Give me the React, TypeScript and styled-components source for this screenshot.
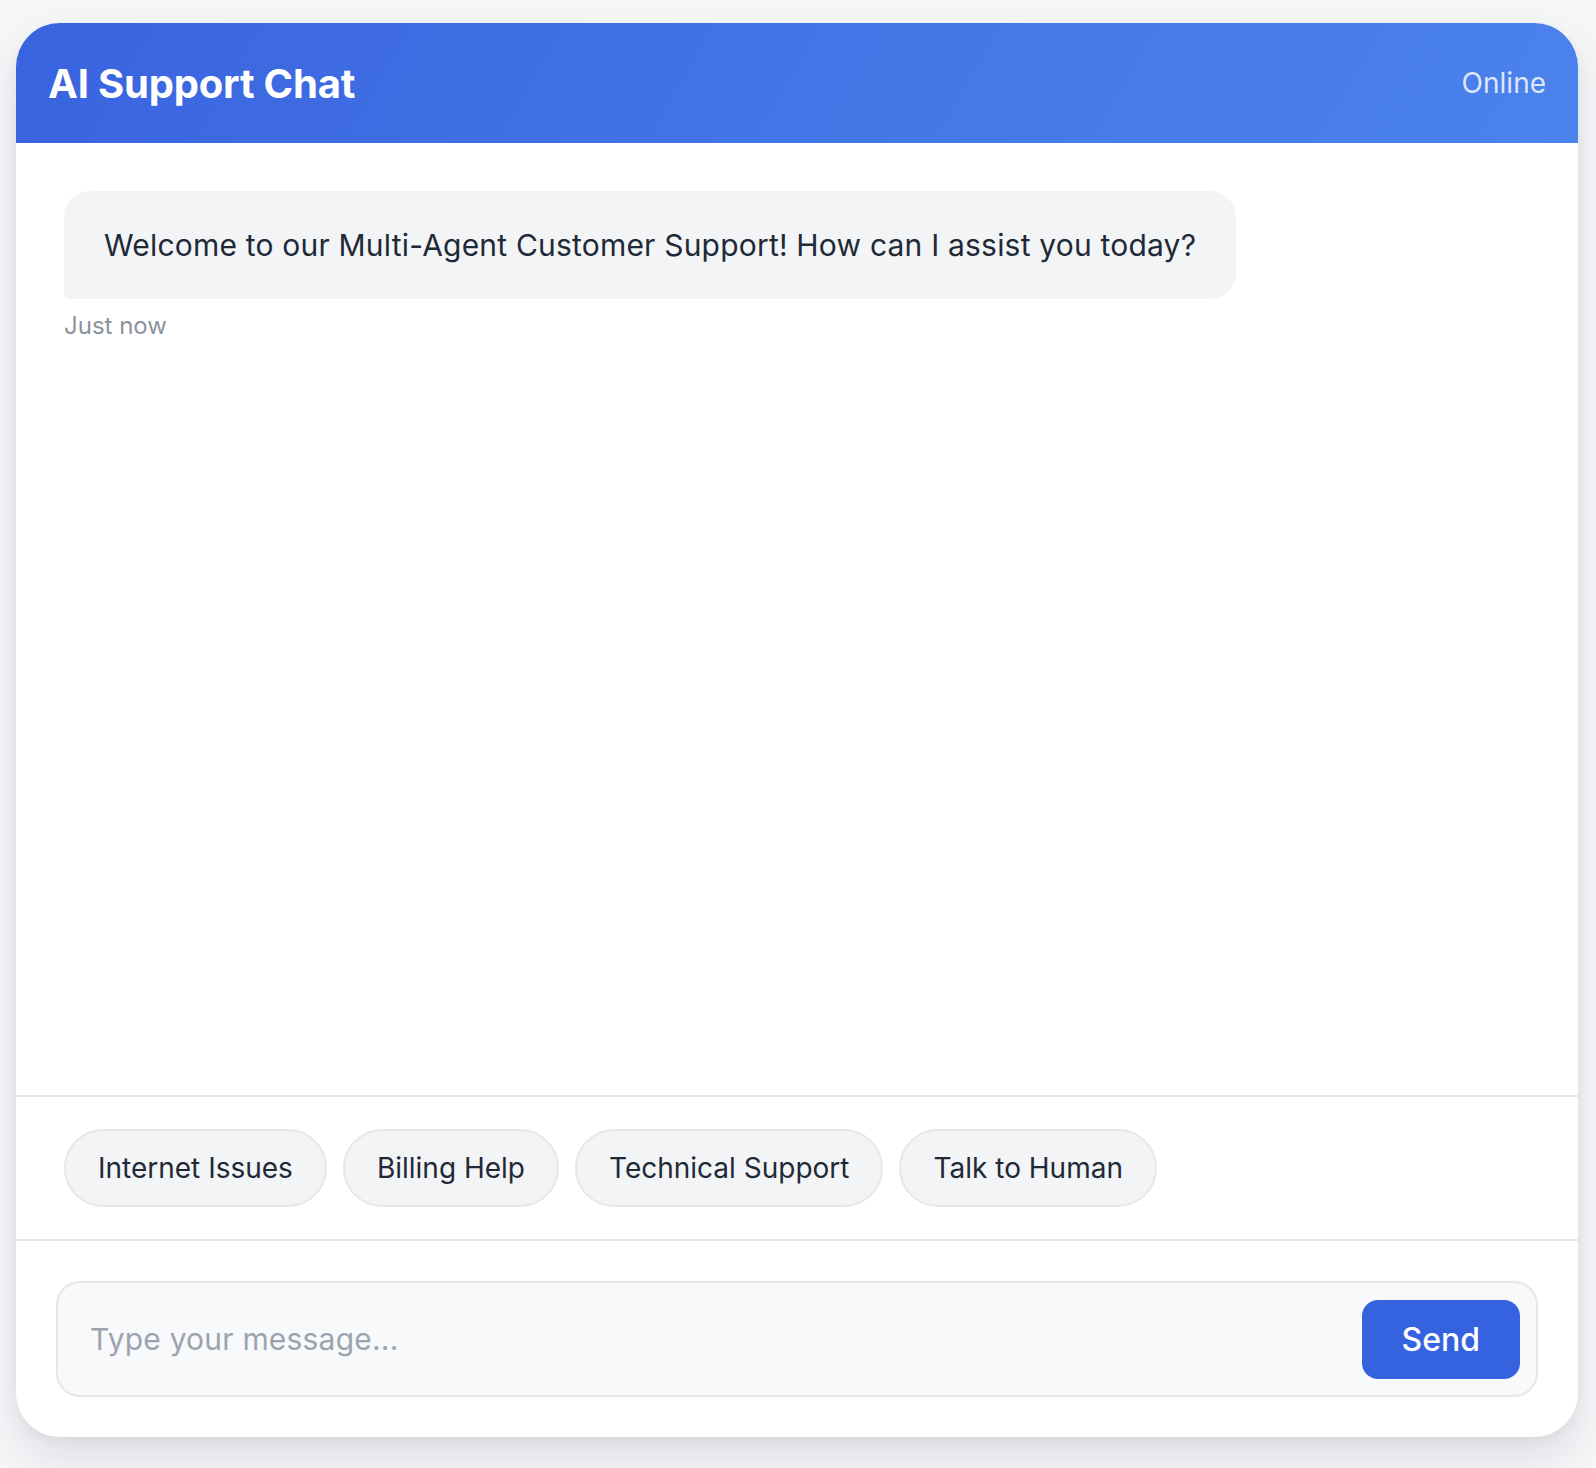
import React from "react";
import styled, { createGlobalStyle } from "styled-components";

const GlobalStyle = createGlobalStyle`
  * { box-sizing: border-box; }
  html, body { margin: 0; padding: 0; background: #f5f6f8; }
  body { font-family: Inter, "Noto Sans", "Liberation Sans", sans-serif; -webkit-font-smoothing: antialiased; }
`;

const Page = styled.div`
  padding: 23px 18px 31px 16px;
  background: #f5f6f8;
`;

const Card = styled.div`
  height: 1414px;
  display: flex;
  flex-direction: column;
  background: #ffffff;
  border-radius: 44px;
  overflow: hidden;
  box-shadow: 0 20px 40px rgba(17, 24, 39, 0.1), 0 4px 12px rgba(17, 24, 39, 0.04);
`;

const Header = styled.header`
  height: 120px;
  flex-shrink: 0;
  display: flex;
  align-items: center;
  justify-content: space-between;
  padding: 0 32px 0 32px;
  background: linear-gradient(120deg, #3a63df 0%, #4377e6 55%, #4c82ec 100%);
`;

const Title = styled.h1`
  margin: 0;
  font-size: 40px;
  font-weight: 700;
  color: #ffffff;
  letter-spacing: -0.2px;
`;

const Status = styled.span`
  font-size: 28px;
  color: rgba(255, 255, 255, 0.82);
`;

const Messages = styled.div`
  flex: 1;
  padding: 48px;
  display: flex;
  flex-direction: column;
  align-items: flex-start;
`;

const Bubble = styled.div`
  max-width: 80%;
  padding: 32px 40px;
  background: #f3f4f6;
  color: #1f2937;
  font-size: 30px;
  letter-spacing: 0.2px;
  line-height: 44px;
  border-radius: 26px 26px 26px 6px;
`;

const Time = styled.span`
  margin-top: 9px;
  font-size: 24px;
  line-height: 36px;
  color: #8b929e;
`;

const QuickRow = styled.div`
  flex-shrink: 0;
  display: flex;
  gap: 16px;
  padding: 32px 48px 32px 48px;
  border-top: 2px solid #e5e7eb;
`;

const Chip = styled.button`
  font-family: inherit;
  font-size: 28px;
  line-height: 42px;
  padding: 16px 32px;
  color: #1f2937;
  background: #f3f4f6;
  border: 2px solid #e5e7eb;
  border-radius: 999px;
  cursor: pointer;
`;

const InputArea = styled.div`
  flex-shrink: 0;
  padding: 40px;
  border-top: 2px solid #e5e7eb;
`;

const InputBox = styled.div`
  display: flex;
  align-items: center;
  height: 116px;
  padding: 16px 16px 16px 30px;
  background: #f8f9fb;
  border: 2px solid #e5e7eb;
  border-radius: 24px;
`;

const TextInput = styled.input`
  flex: 1;
  min-width: 0;
  border: none;
  outline: none;
  background: transparent;
  font-family: inherit;
  font-size: 30px;
  letter-spacing: 0.2px;
  color: #1f2937;
  &::placeholder { color: #9ca3af; }
`;

const SendButton = styled.button`
  height: 79px;
  padding: 0 40px;
  border: none;
  border-radius: 16px;
  background: #3563e0;
  color: #ffffff;
  font-family: inherit;
  font-size: 32px;
  font-weight: 500;
  cursor: pointer;
`;

const chips = ["Internet Issues", "Billing Help", "Technical Support", "Talk to Human"];

export default function App() {
  return (
    <>
      <GlobalStyle />
      <Page>
        <Card>
          <Header>
            <Title>AI Support Chat</Title>
            <Status>Online</Status>
          </Header>
          <Messages>
            <Bubble>Welcome to our Multi-Agent Customer Support! How can I assist you today?</Bubble>
            <Time>Just now</Time>
          </Messages>
          <QuickRow>
            {chips.map((c) => (
              <Chip key={c}>{c}</Chip>
            ))}
          </QuickRow>
          <InputArea>
            <InputBox>
              <TextInput placeholder="Type your message..." />
              <SendButton>Send</SendButton>
            </InputBox>
          </InputArea>
        </Card>
      </Page>
    </>
  );
}
